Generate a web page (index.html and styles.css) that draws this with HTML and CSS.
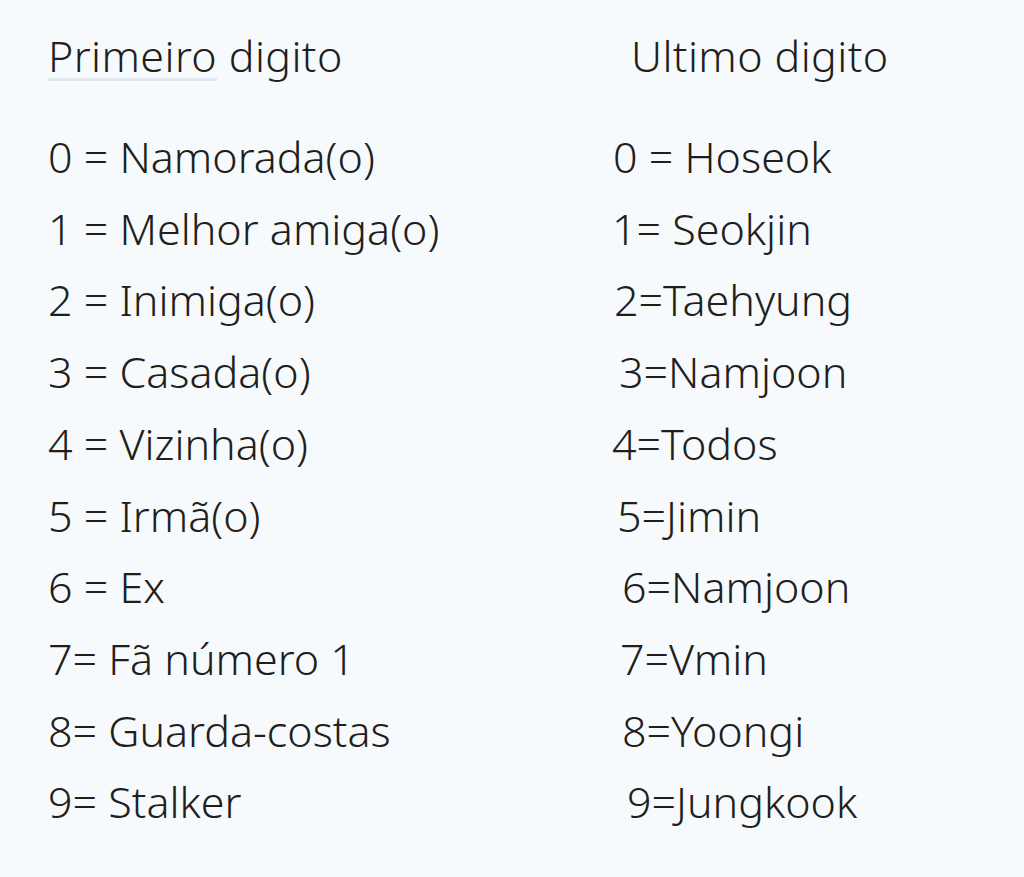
FILE: index.html
```html
<!DOCTYPE html>
<html lang="pt">
<head>
<meta charset="utf-8">
<title>Digitos</title>
<link rel="stylesheet" href="styles.css">
</head>
<body>
<main class="sheet">
  <section class="col col-left">
    <h2 class="head"><span class="mark">Primeiro</span> digito</h2>
    <ul class="list">
      <li>0 = Namorada(o)</li>
      <li>1 = Melhor amiga(o)</li>
      <li>2 = Inimiga(o)</li>
      <li>3 = Casada(o)</li>
      <li>4 = Vizinha(o)</li>
      <li>5 = Irmã(o)</li>
      <li>6 = Ex</li>
      <li>7= Fã número 1</li>
      <li>8= Guarda-costas</li>
      <li>9= Stalker</li>
    </ul>
  </section>
  <section class="col col-right">
    <h2 class="head head-right">Ultimo digito</h2>
    <ul class="list">
      <li class="o1">0 = Hoseok</li>
      <li class="o0">1= Seokjin</li>
      <li class="o2">2=Taehyung</li>
      <li class="o7">3=Namjoon</li>
      <li class="o0">4=Todos</li>
      <li class="o5">5=Jimin</li>
      <li class="o10">6=Namjoon</li>
      <li class="o8">7=Vmin</li>
      <li class="o10">8=Yoongi</li>
      <li class="o15">9=Jungkook</li>
    </ul>
  </section>
</main>
</body>
</html>
```

FILE: styles.css
```css
html, body {
  margin: 0;
  padding: 0;
  background: #f7fafd;
}
body {
  width: 1024px;
  height: 877px;
  overflow: hidden;
  font-family: "Noto Sans", "Open Sans", sans-serif;
  font-weight: 350;
  color: #221e1b;
}
.sheet {
  display: flex;
  padding: 25px 0 0 48px;
}
.col-left {
  width: 564px;
}
.head {
  margin: 0;
  font-weight: 350;
  font-size: 43px;
  letter-spacing: 0.4px;
  line-height: 62px;
}
.mark {
  text-decoration: underline;
  text-decoration-color: #dfe6f0;
  text-decoration-thickness: 3px;
  text-underline-offset: 6px;
}
.head-right {
  padding-left: 19px;
}
.list {
  list-style: none;
  margin: 0;
  padding: 0;
  padding-top: 34px;
}
.list li {
  font-size: 43px;
  letter-spacing: 0;
  line-height: 71.7px;
  white-space: nowrap;
}
.o0 { padding-left: 0; }
.o1 { padding-left: 1px; }
.o2 { padding-left: 2px; }
.o5 { padding-left: 5px; }
.o7 { padding-left: 7px; }
.o8 { padding-left: 8px; }
.o10 { padding-left: 10px; }
.o15 { padding-left: 15px; }
```
